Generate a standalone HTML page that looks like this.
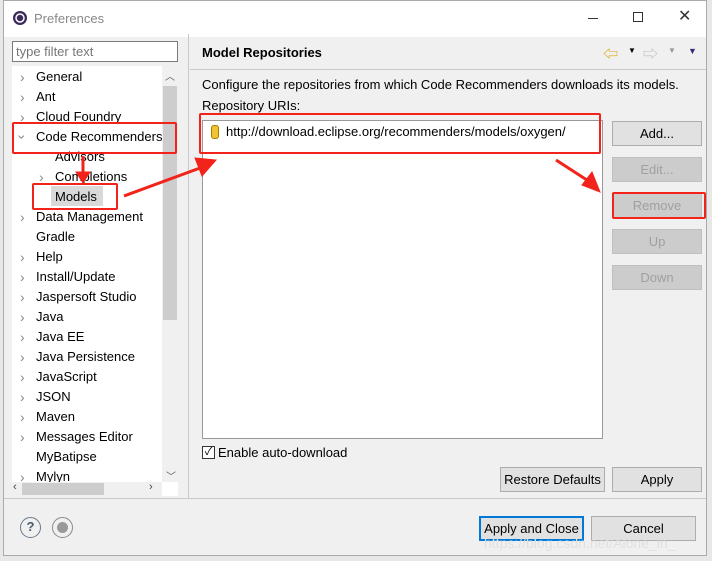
<!DOCTYPE html>
<html><head><meta charset="utf-8"><style>
*{box-sizing:border-box}
body{margin:0;width:712px;height:561px;background:#fff;font-family:"Liberation Sans","Noto Sans CJK SC",sans-serif;font-size:13px;color:#000;position:relative;overflow:hidden}
.a{position:absolute}
.win{left:3px;top:0;width:704px;height:556px;background:#f0f0f0;border:1px solid #aaa}
.btn{position:absolute;background:#e1e1e1;border:1px solid #adadad;text-align:center;line-height:24px;font-size:13px}
.dis{color:#a0a0a0;background:#cccccc;border-color:#bfbfbf}
.ti{position:absolute;left:36px;font-size:13px;white-space:nowrap}
.ch{position:absolute;left:20px;color:#888;font-size:14px;line-height:14px;margin-top:1px}
.red{position:absolute;border:2px solid #f2231b;border-radius:2px}
</style></head><body>
<div class="a" style="left:0;top:0;width:712px;height:561px;background:#e8e8e8"></div>
<div class="a win"></div>
<div class="a" style="left:4px;top:1px;width:702px;height:36px;background:#fff"></div>
<svg class="a" style="left:12px;top:10px" width="16" height="16"><circle cx="8" cy="8" r="7" fill="#3b2a5a"/><circle cx="8" cy="8" r="4" fill="none" stroke="#fff" stroke-width="1.5"/></svg>
<div class="a" style="left:34px;top:11px;color:#888;font-size:13px">Preferences</div>
<div class="a" style="left:588px;top:18px;width:10px;height:1px;background:#333"></div>
<div class="a" style="left:633px;top:12px;width:10px;height:10px;border:1px solid #333"></div>
<div class="a" style="left:678px;top:6px;font-size:16px;color:#333">✕</div>
<!-- left -->
<div class="a" style="left:12px;top:41px;width:166px;height:21px;background:#fff;border:1px solid #7a7a7a;color:#777;padding:2px 3px">type filter text</div>
<div class="a" style="left:12px;top:66px;width:166px;height:430px;background:#fff"></div>
<div class="a" style="left:162px;top:66px;width:16px;height:416px;background:#f0f0f0"></div>
<div class="a" style="left:163px;top:86px;width:14px;height:234px;background:#cdcdcd"></div>
<div class="a" style="left:165px;top:68px;font-size:10px;color:#555">︿</div>
<div class="a" style="left:166px;top:468px;font-size:10px;color:#555">﹀</div>
<div class="a" style="left:12px;top:482px;width:150px;height:14px;background:#f0f0f0"></div>
<div class="a" style="left:22px;top:483px;width:82px;height:12px;background:#cdcdcd"></div>
<div class="a" style="left:13px;top:481px;font-size:11px;color:#444">‹</div>
<div class="a" style="left:149px;top:481px;font-size:11px;color:#444">›</div>
<div class="ch" style="top:69px">›</div><div class="ti" style="top:69px">General</div>
<div class="ch" style="top:89px">›</div><div class="ti" style="top:89px">Ant</div>
<div class="ch" style="top:109px">›</div><div class="ti" style="top:109px">Cloud Foundry</div>
<div class="ch" style="top:129px;transform:rotate(90deg)">›</div><div class="ti" style="top:129px">Code Recommenders</div>
<div class="ti" style="top:149px;left:55px">Advisors</div>
<div class="ch" style="top:169px;left:39px">›</div><div class="ti" style="top:169px;left:55px">Completions</div>
<div class="a" style="left:51px;top:186px;width:52px;height:20px;background:#d9d9d9"></div>
<div class="ti" style="top:189px;left:55px">Models</div>
<div class="ch" style="top:209px">›</div><div class="ti" style="top:209px">Data Management</div>
<div class="ti" style="top:229px">Gradle</div>
<div class="ch" style="top:249px">›</div><div class="ti" style="top:249px">Help</div>
<div class="ch" style="top:269px">›</div><div class="ti" style="top:269px">Install/Update</div>
<div class="ch" style="top:289px">›</div><div class="ti" style="top:289px">Jaspersoft Studio</div>
<div class="ch" style="top:309px">›</div><div class="ti" style="top:309px">Java</div>
<div class="ch" style="top:329px">›</div><div class="ti" style="top:329px">Java EE</div>
<div class="ch" style="top:349px">›</div><div class="ti" style="top:349px">Java Persistence</div>
<div class="ch" style="top:369px">›</div><div class="ti" style="top:369px">JavaScript</div>
<div class="ch" style="top:389px">›</div><div class="ti" style="top:389px">JSON</div>
<div class="ch" style="top:409px">›</div><div class="ti" style="top:409px">Maven</div>
<div class="ch" style="top:429px">›</div><div class="ti" style="top:429px">Messages Editor</div>
<div class="ti" style="top:449px">MyBatipse</div>
<div class="a" style="left:12px;top:466px;width:150px;height:16px;overflow:hidden"><div class="ch" style="top:3px;left:8px">›</div><div class="ti" style="top:3px;left:24px">Mylyn</div></div>
<!-- divider -->
<div class="a" style="left:188px;top:34px;width:1px;height:464px;background:#c8c8c8"></div>
<div class="a" style="left:190px;top:69px;width:516px;height:1px;background:#c8c8c8"></div>
<div class="a" style="left:202px;top:45px;font-weight:bold;font-size:13px">Model Repositories</div>
<div class="a" style="left:603px;top:43px;color:#d9a400;font-size:15px">⇦</div>
<div class="a" style="left:628px;top:46px;font-size:8px">▼</div>
<div class="a" style="left:643px;top:43px;color:#bbb;font-size:15px">⇨</div>
<div class="a" style="left:668px;top:46px;font-size:8px;color:#999">▼</div>
<div class="a" style="left:688px;top:46px;font-size:9px;color:#3b2a7a">▼</div>
<div class="a" style="left:202px;top:77px">Configure the repositories from which Code Recommenders downloads its models.</div>
<div class="a" style="left:202px;top:98px">Repository URIs:</div>
<div class="a" style="left:202px;top:120px;width:401px;height:319px;background:#fff;border:1px solid #999"></div>
<div class="a" style="left:211px;top:125px;width:8px;height:14px;background:#f1c232;border:1px solid #a67c00;border-radius:3px"></div>
<div class="a" style="left:226px;top:124px">http://download.eclipse.org/recommenders/models/oxygen/</div>
<div class="btn" style="left:612px;top:121px;width:90px;height:25px">Add...</div>
<div class="btn dis" style="left:612px;top:157px;width:90px;height:25px">Edit...</div>
<div class="btn dis" style="left:612px;top:193px;width:90px;height:25px">Remove</div>
<div class="btn dis" style="left:612px;top:229px;width:90px;height:25px">Up</div>
<div class="btn dis" style="left:612px;top:265px;width:90px;height:25px">Down</div>
<div class="a" style="left:202px;top:446px;width:13px;height:13px;border:1px solid #333;background:#fff;font-size:11px;line-height:11px;text-align:center">✓</div>
<div class="a" style="left:218px;top:445px">Enable auto-download</div>
<div class="btn" style="left:500px;top:467px;width:105px;height:25px">Restore Defaults</div>
<div class="btn" style="left:612px;top:467px;width:90px;height:25px">Apply</div>
<div class="a" style="left:4px;top:498px;width:702px;height:1px;background:#c8c8c8"></div>
<div class="a" style="left:20px;top:517px;width:21px;height:21px;border:1.5px solid #6a7a8a;border-radius:50%;text-align:center;font-weight:bold;color:#4a5a6a;line-height:18px">?</div>
<div class="a" style="left:52px;top:517px;width:21px;height:21px;border:1.5px solid #8a8a8a;border-radius:50%"></div>
<div class="a" style="left:57px;top:522px;width:11px;height:11px;background:#999;border-radius:50%"></div>
<div class="btn" style="left:479px;top:516px;width:105px;height:25px;border:2px solid #0078d7;line-height:22px">Apply and Close</div>
<div class="btn" style="left:591px;top:516px;width:105px;height:25px">Cancel</div>
<div class="a" style="left:484px;top:535px;color:#e0e0e0;font-size:14px">https://blog.csdn.net/Alone_in_</div>
<!-- annotations -->
<div class="red" style="left:12px;top:122px;width:165px;height:32px"></div>
<div class="red" style="left:32px;top:183px;width:86px;height:27px"></div>
<div class="red" style="left:199px;top:113px;width:402px;height:41px"></div>
<div class="red" style="left:612px;top:192px;width:94px;height:27px"></div>
<svg class="a" style="left:0;top:0" width="712" height="561">
<g fill="#f2231b" stroke="#f2231b">
<line x1="83" y1="156" x2="83" y2="175" stroke-width="3"/><polygon points="76,172 90,172 83,183"/>
<line x1="124" y1="196" x2="200" y2="168" stroke-width="3"/><polygon points="195,158 216,160 202,176"/>
<line x1="556" y1="160" x2="590" y2="182" stroke-width="3"/><polygon points="582,185 600,192 592,172"/>
</g></svg>
</body></html>
